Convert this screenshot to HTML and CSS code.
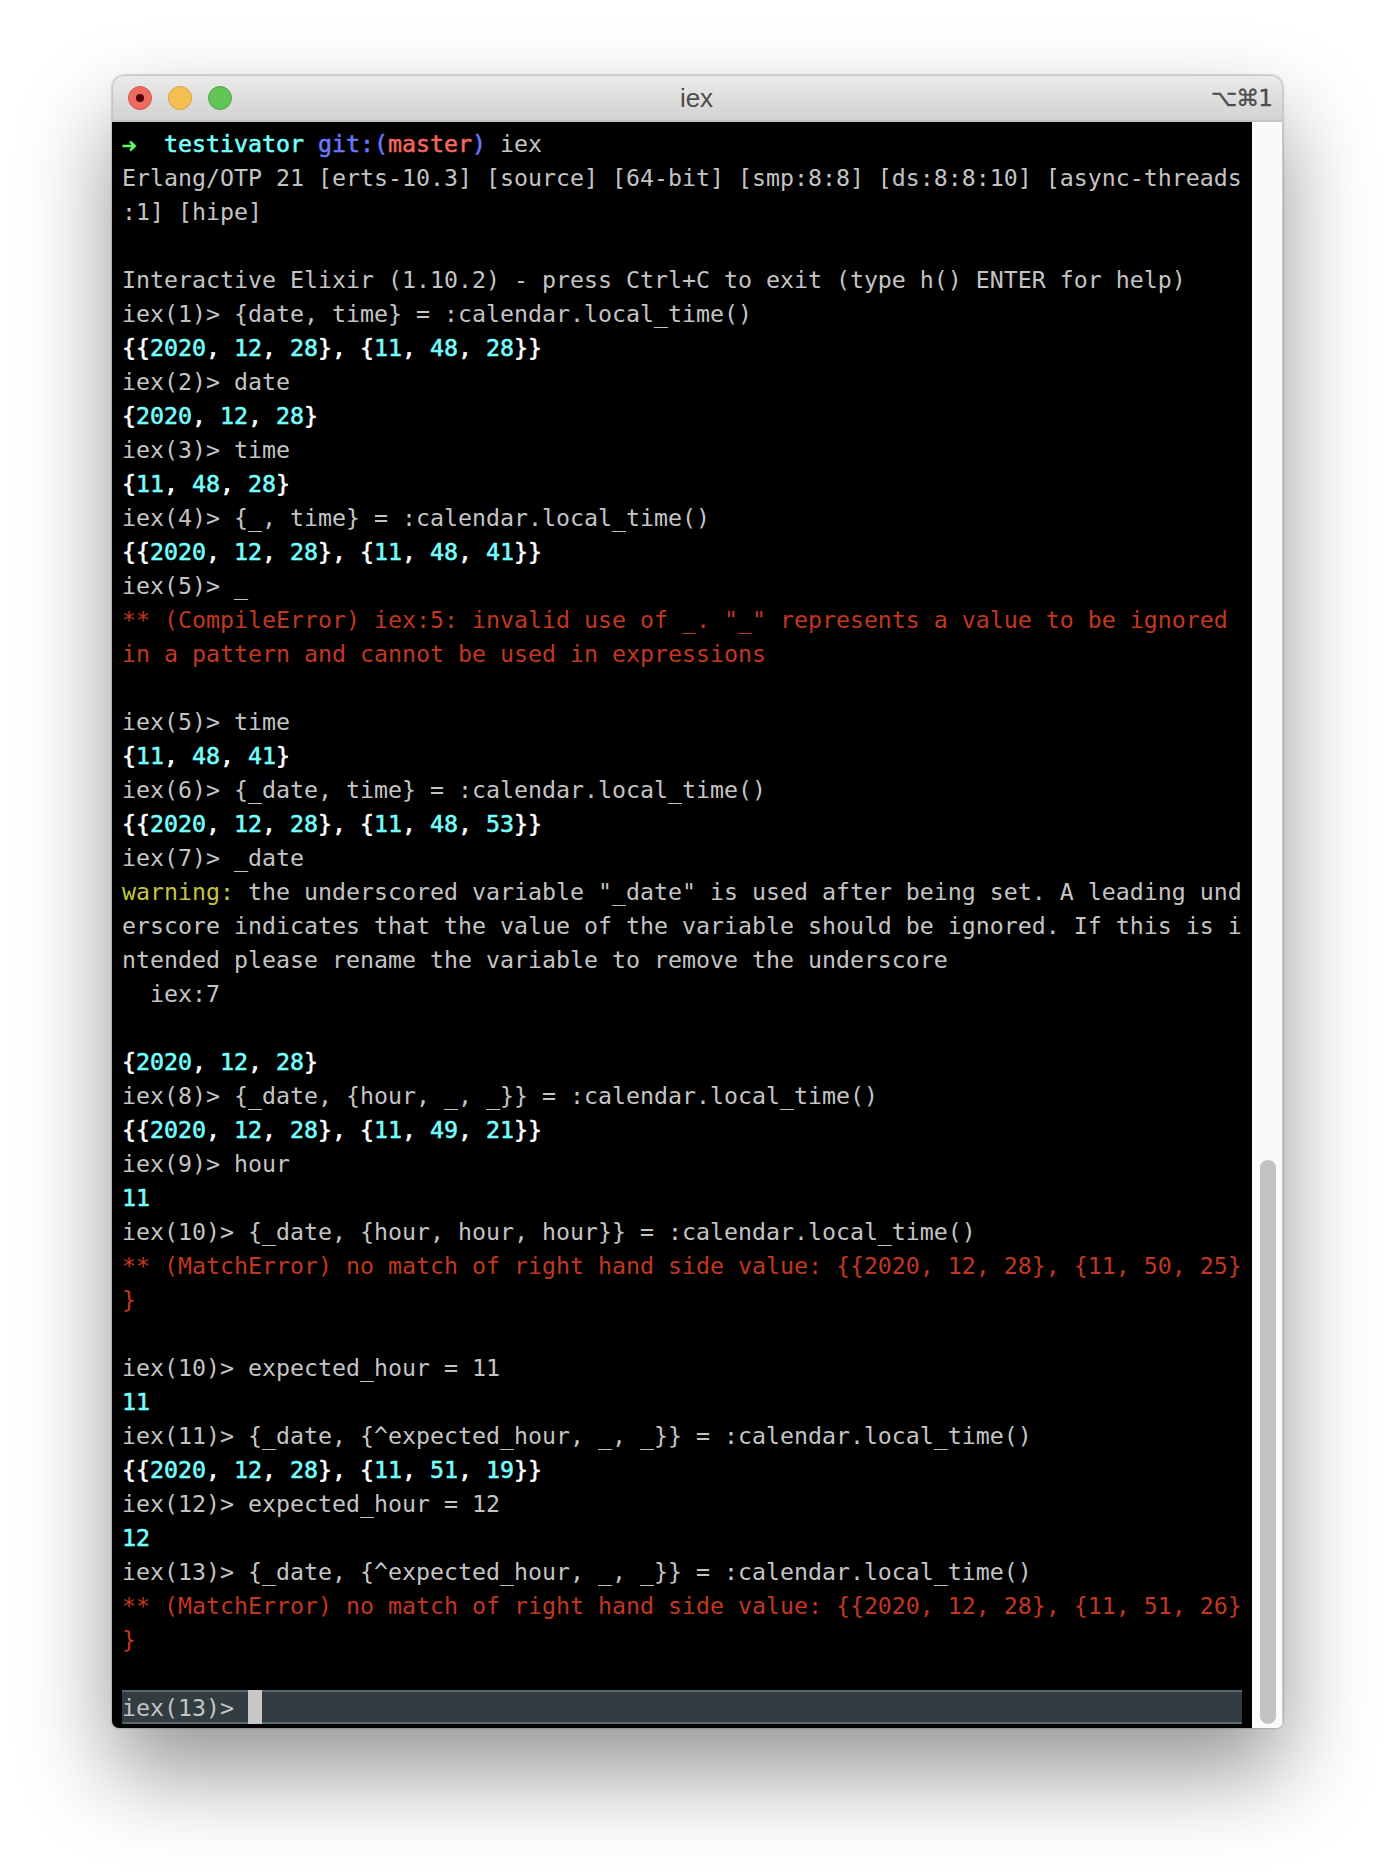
FILE: index.html
```html
<!DOCTYPE html>
<html lang="en">
<head>
<meta charset="utf-8">
<title>iex</title>
<link rel="stylesheet" href="styles.css">
</head>
<body>
<main class="window">
<header class="titlebar">
<div class="lights"><span class="light red"><i class="dot"></i></span><span class="light yellow"></span><span class="light green"></span></div>
<div class="title">iex</div>
<div class="shortcut">⌥⌘1</div>
</header>
<div class="body">
<div class="terminal">
<pre class="output"><svg class="arrow" width="14" height="14" viewBox="0 0 14 14" aria-hidden="true"><path d="M0.5 7H12.5M8 2.5L12.8 7L8 11.5" fill="none" stroke="#5ff967" stroke-width="2.4"/></svg>  <b class="cy">testivator</b> <b class="bl">git:(</b><b class="rd">master</b><b class="bl">)</b> iex
Erlang/OTP 21 [erts-10.3] [source] [64-bit] [smp:8:8] [ds:8:8:10] [async-threads
:1] [hipe]

Interactive Elixir (1.10.2) - press Ctrl+C to exit (type h() ENTER for help)
iex(1)&gt; {date, time} = :calendar.local_time()
<b class="wh">{{<span class="cy">2020</span>, <span class="cy">12</span>, <span class="cy">28</span>}, {<span class="cy">11</span>, <span class="cy">48</span>, <span class="cy">28</span>}}</b>
iex(2)&gt; date
<b class="wh">{<span class="cy">2020</span>, <span class="cy">12</span>, <span class="cy">28</span>}</b>
iex(3)&gt; time
<b class="wh">{<span class="cy">11</span>, <span class="cy">48</span>, <span class="cy">28</span>}</b>
iex(4)&gt; {_, time} = :calendar.local_time()
<b class="wh">{{<span class="cy">2020</span>, <span class="cy">12</span>, <span class="cy">28</span>}, {<span class="cy">11</span>, <span class="cy">48</span>, <span class="cy">41</span>}}</b>
iex(5)&gt; _
<span class="err">** (CompileError) iex:5: invalid use of _. "_" represents a value to be ignored
in a pattern and cannot be used in expressions</span>

iex(5)&gt; time
<b class="wh">{<span class="cy">11</span>, <span class="cy">48</span>, <span class="cy">41</span>}</b>
iex(6)&gt; {_date, time} = :calendar.local_time()
<b class="wh">{{<span class="cy">2020</span>, <span class="cy">12</span>, <span class="cy">28</span>}, {<span class="cy">11</span>, <span class="cy">48</span>, <span class="cy">53</span>}}</b>
iex(7)&gt; _date
<span class="warn">warning:</span> the underscored variable "_date" is used after being set. A leading und
erscore indicates that the value of the variable should be ignored. If this is i
ntended please rename the variable to remove the underscore
  iex:7

<b class="wh">{<span class="cy">2020</span>, <span class="cy">12</span>, <span class="cy">28</span>}</b>
iex(8)&gt; {_date, {hour, _, _}} = :calendar.local_time()
<b class="wh">{{<span class="cy">2020</span>, <span class="cy">12</span>, <span class="cy">28</span>}, {<span class="cy">11</span>, <span class="cy">49</span>, <span class="cy">21</span>}}</b>
iex(9)&gt; hour
<b class="cy">11</b>
iex(10)&gt; {_date, {hour, hour, hour}} = :calendar.local_time()
<span class="err">** (MatchError) no match of right hand side value: {{2020, 12, 28}, {11, 50, 25}
}</span>

iex(10)&gt; expected_hour = 11
<b class="cy">11</b>
iex(11)&gt; {_date, {^expected_hour, _, _}} = :calendar.local_time()
<b class="wh">{{<span class="cy">2020</span>, <span class="cy">12</span>, <span class="cy">28</span>}, {<span class="cy">11</span>, <span class="cy">51</span>, <span class="cy">19</span>}}</b>
iex(12)&gt; expected_hour = 12
<b class="cy">12</b>
iex(13)&gt; {_date, {^expected_hour, _, _}} = :calendar.local_time()
<span class="err">** (MatchError) no match of right hand side value: {{2020, 12, 28}, {11, 51, 26}
}</span>
</pre>
<div class="prompt">iex(13)&gt; <span class="cursor"></span></div>
</div>
<aside class="scrollbar"><div class="thumb"></div></aside>
</div>
</main>
</body>
</html>
```

FILE: styles.css
```css
* { box-sizing: border-box; }
html, body { margin: 0; height: 100%; }
body {
  background: #fff;
  padding: 75px 111px 0 112px;
  width: 1394px;
  height: 1876px;
  overflow: hidden;
}
.window {
  width: 1171px;
  height: 1653px;
  border-radius: 12px 12px 7px 7px;
  overflow: hidden;
  display: flex;
  flex-direction: column;
  box-shadow: 0 44px 90px rgba(0, 0, 0, .42), 0 0 2px rgba(0, 0, 0, .45);
}
.titlebar {
  height: 47px;
  flex: none;
  display: flex;
  align-items: center;
  padding: 0 10px 0 15px;
  background: linear-gradient(#ebebeb, #d2d2d2);
  border: 1px solid #c6c6c6;
  border-bottom: 2px solid #c4c4c4;
  border-radius: 12px 12px 0 0;
  position: relative;
}
.lights { display: flex; gap: 16px; }
.light {
  width: 24px;
  height: 24px;
  border-radius: 50%;
  display: flex;
  align-items: center;
  justify-content: center;
  border: 1px solid;
}
.red { background: #ee6a5f; border-color: #d6564c; }
.yellow { background: #f5bf4f; border-color: #d9a13c; }
.green { background: #61c454; border-color: #4fa944; }
.dot { width: 8px; height: 8px; border-radius: 50%; background: #4d0000; }
.title {
  position: absolute;
  left: -2px;
  right: 0;
  text-align: center;
  font: 26px/47px "Liberation Sans", sans-serif;
  color: #4c4c4c;
}
.shortcut {
  margin-left: auto;
  font: 23px "DejaVu Sans", sans-serif;
  letter-spacing: -1px;
  -webkit-text-stroke: .3px currentColor;
  color: #4c4c4c;
}
.body { flex: 1; display: flex; min-height: 0; }
.terminal {
  width: 1140px;
  background: #000;
  padding: 5px 10px 0;
  font: 23.25px/34px "DejaVu Sans Mono", monospace;
  color: #c4c4c4;
}
.output { margin: 0; font: inherit; height: 1563px; }
.output b { font-weight: 400; -webkit-text-stroke: .55px currentColor; }
.cy { color: #76ffff; }
.wh { color: #fff; }
.bl { color: #6a76fb; }
.rd { color: #f4665e; }
.err { color: #c33720; }
.warn { color: #c7c53f; }
.arrow { vertical-align: -1px; }
.prompt {
  height: 34px;
  background: #323c41;
  border-top: 2px solid #566870;
  border-bottom: 2px solid #566870;
  line-height: 32px;
  white-space: pre;
  display: flex;
}
.cursor { width: 14px; height: 34px; margin-top: -2px; background: #c7c7c7; }
.scrollbar {
  flex: 1;
  background: #fafafa;
  border-right: 1px solid #c8c8c8;
  padding: 1038px 6px 4px 8px;
}
.thumb { height: 100%; width: 16px; border-radius: 8px; background: #c2c2c2; }
```
